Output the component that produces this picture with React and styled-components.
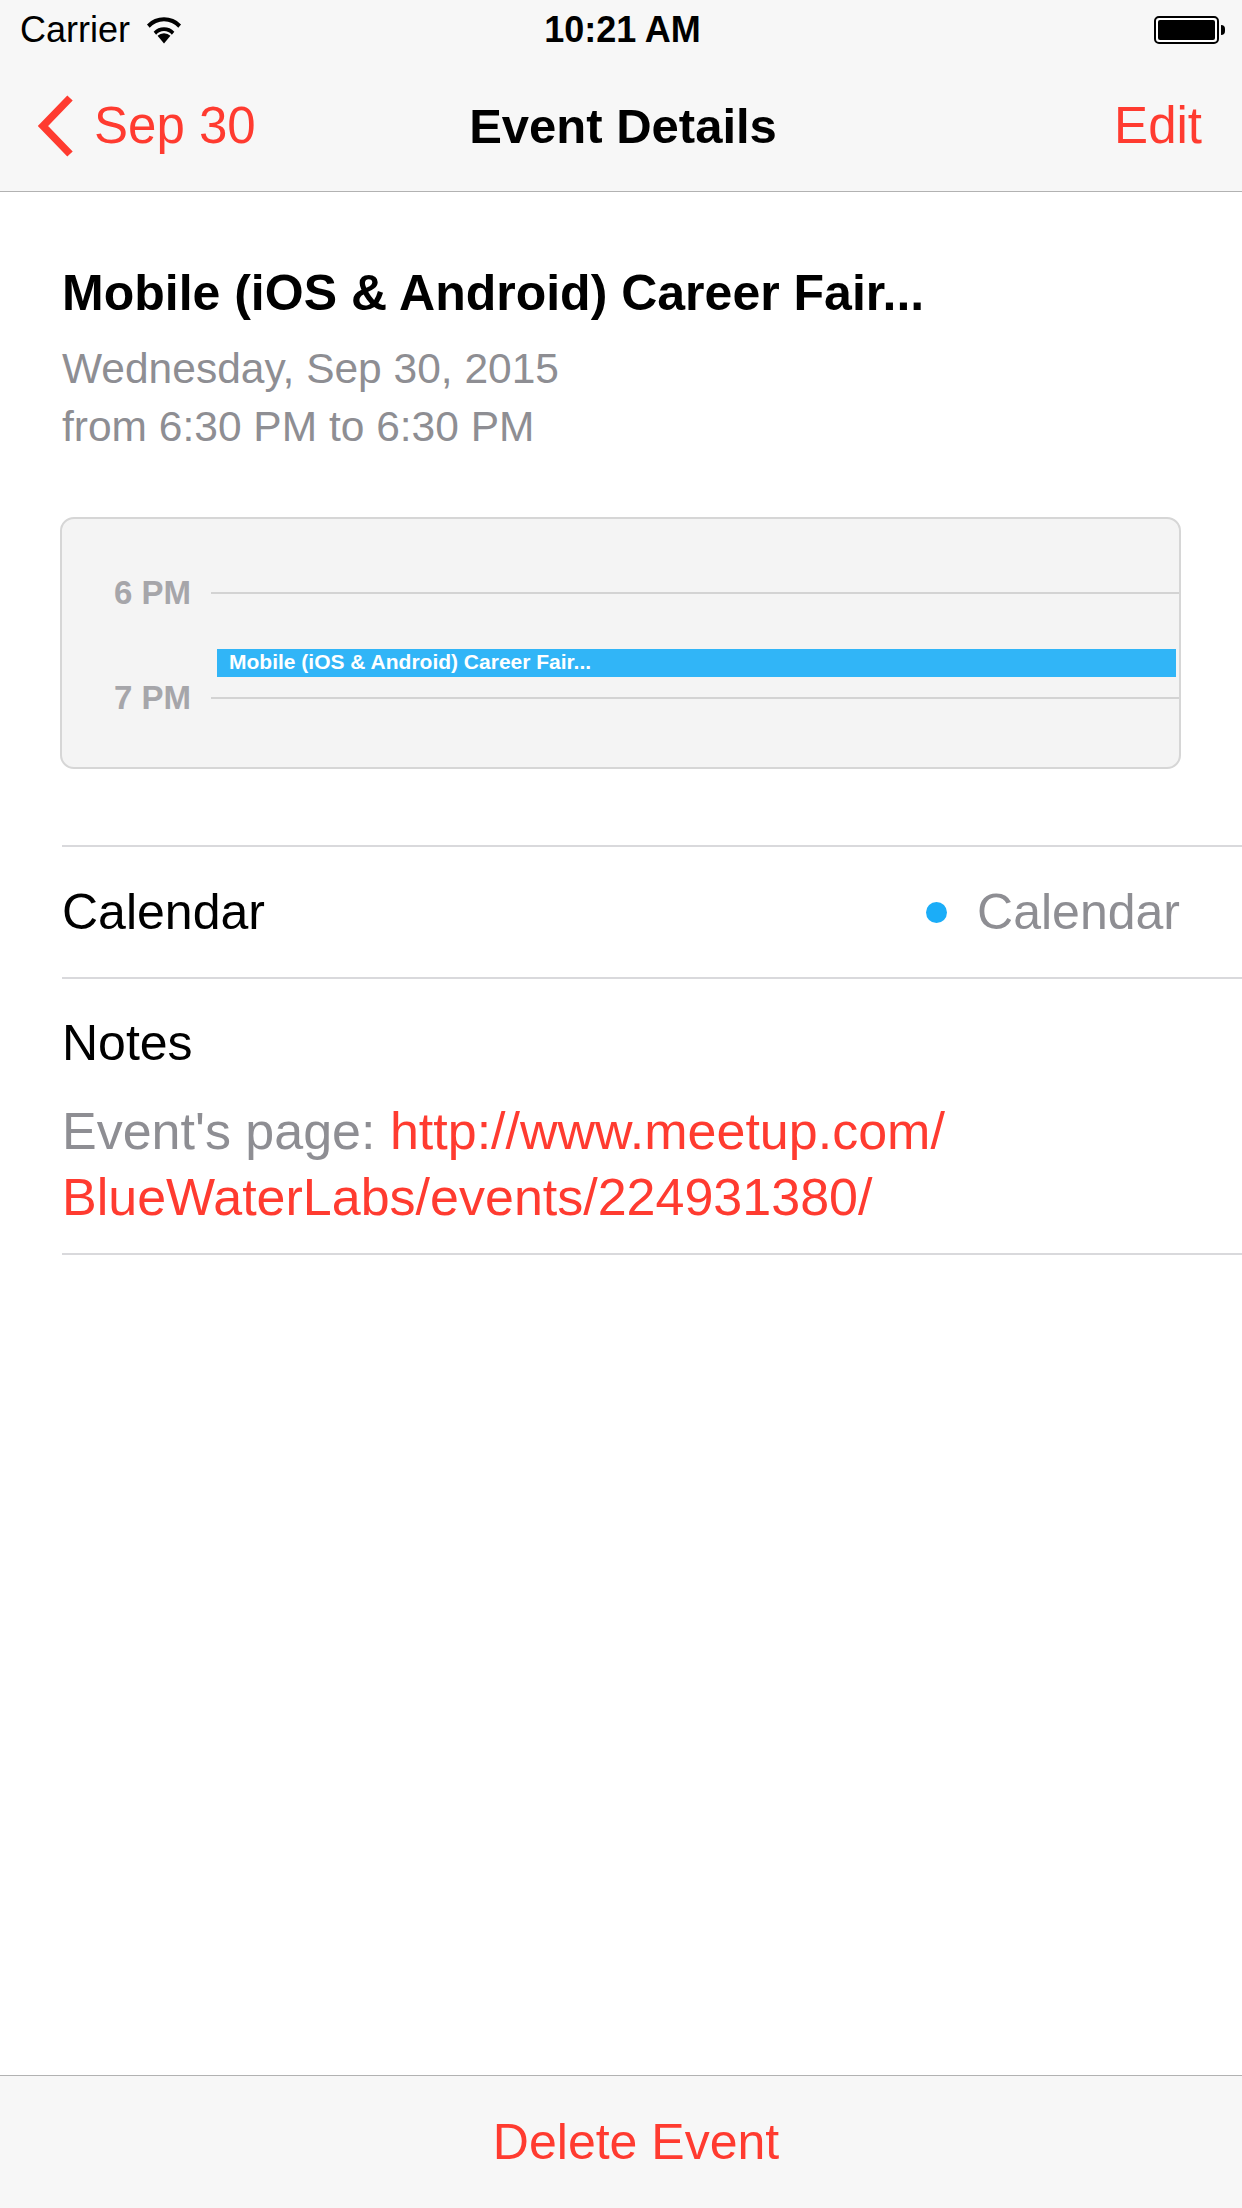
import React from 'react';
import styled, { createGlobalStyle } from 'styled-components';

const RED = '#ff3b30';
const GRAY = '#8e8e93';

const GlobalStyle = createGlobalStyle`
  html, body {
    margin: 0;
    padding: 0;
    background: #ffffff;
  }
  body {
    font-family: "Liberation Sans", Arial, sans-serif;
    -webkit-font-smoothing: antialiased;
  }
`;

const WifiIcon = () => (
  <svg width="38" height="28" viewBox="0 0 34 26">
    <path d="M17 25.5 L11 18.4 A8.6 8.6 0 0 1 23 18.4 Z" fill="#000" />
    <path
      d="M7.4 14.6 A13.4 13.4 0 0 1 26.6 14.6 L24.3 17.3 A9.8 9.8 0 0 0 9.7 17.3 Z"
      fill="#000"
    />
    <path
      d="M1.2 7.8 A22 22 0 0 1 32.8 7.8 L30.3 10.8 A18 18 0 0 0 3.7 10.8 Z"
      fill="#000"
    />
  </svg>
);

const BackChevron = () => (
  <svg width="40" height="64" viewBox="0 0 40 64">
    <polyline
      points="34,4 7,32 34,60"
      fill="none"
      stroke={RED}
      strokeWidth="7.5"
      strokeLinecap="butt"
      strokeLinejoin="miter"
    />
  </svg>
);

const App = () => {
  return (
    <>
      <GlobalStyle />
      <Page>
        <TopBars>
          <StatusBar>
            <StatusLeft>
              <Carrier>Carrier</Carrier>
              <WifiIcon />
            </StatusLeft>
            <Clock>10:21 AM</Clock>
            <StatusRight>
              <Battery>
                <BatteryBody>
                  <BatteryLevel />
                </BatteryBody>
                <BatteryNub />
              </Battery>
            </StatusRight>
          </StatusBar>
          <NavBar>
            <BackButton>
              <BackChevron />
              <span>Sep 30</span>
            </BackButton>
            <NavTitle>Event Details</NavTitle>
            <NavAction>Edit</NavAction>
          </NavBar>
        </TopBars>

        <Content>
          <Summary>
            <EventTitle>Mobile (iOS &amp; Android) Career Fair...</EventTitle>
            <Meta>Wednesday, Sep 30, 2015</Meta>
            <Meta>from 6:30 PM to 6:30 PM</Meta>
          </Summary>

          <DayCard>
            <HourRow>
              <HourLabel>6 PM</HourLabel>
              <HourLine />
            </HourRow>
            <HourRow>
              <HourLabel>7 PM</HourLabel>
              <HourLine />
            </HourRow>
            <EventBlock>Mobile (iOS &amp; Android) Career Fair...</EventBlock>
          </DayCard>

          <Cell>
            <CellLabel>Calendar</CellLabel>
            <CellValue>
              <Dot />
              Calendar
            </CellValue>
          </Cell>

          <NotesCell>
            <CellLabel>Notes</CellLabel>
            <NoteText>
              Event's page:{' '}
              <Link>
                http://www.meetup.com/<wbr />BlueWaterLabs/events/224931380/
              </Link>
            </NoteText>
          </NotesCell>
        </Content>

        <Toolbar>
          <DeleteButton>Delete Event</DeleteButton>
        </Toolbar>
      </Page>
    </>
  );
};

const Page = styled.div`
  width: 1242px;
  height: 2208px;
  display: flex;
  flex-direction: column;
  background: #ffffff;
  overflow: hidden;
`;

const TopBars = styled.header`
  background: #f7f7f7;
  border-bottom: 1px solid #b2b2b2;
`;

const StatusBar = styled.div`
  height: 60px;
  display: grid;
  grid-template-columns: 1fr auto 1fr;
  align-items: center;
  padding: 0 17px 0 20px;
`;

const StatusLeft = styled.div`
  display: flex;
  align-items: center;
  gap: 15px;
`;

const Carrier = styled.span`
  font-size: 36px;
  color: #000;
`;

const Clock = styled.span`
  font-size: 36px;
  font-weight: 700;
  color: #000;
`;

const StatusRight = styled.div`
  display: flex;
  justify-content: flex-end;
`;

const Battery = styled.div`
  display: flex;
  align-items: center;
`;

const BatteryBody = styled.div`
  width: 65px;
  height: 28px;
  box-sizing: border-box;
  padding: 2px;
  border: 2px solid #000;
  border-radius: 5px;
  background: #ffffff;
  display: flex;
`;

const BatteryLevel = styled.div`
  flex: 1;
  border-radius: 2px;
  background: #000;
`;

const BatteryNub = styled.div`
  width: 4px;
  height: 10px;
  margin-left: 2px;
  border-radius: 0 5px 5px 0;
  background: #000;
`;

const NavBar = styled.nav`
  height: 131px;
  display: grid;
  grid-template-columns: 1fr auto 1fr;
  align-items: center;
  padding: 0 40px 0 36px;
`;

const BackButton = styled.div`
  display: flex;
  align-items: center;
  gap: 18px;
  color: ${RED};
  font-size: 51px;
`;

const NavTitle = styled.div`
  font-size: 49px;
  font-weight: 700;
  color: #000;
  padding-left: 8px;
`;

const NavAction = styled.div`
  justify-self: end;
  font-size: 51px;
  color: ${RED};
`;

const Content = styled.main`
  flex: 1;
  display: flex;
  flex-direction: column;
`;

const Summary = styled.section`
  padding: 71px 62px 0;
`;

const EventTitle = styled.h1`
  margin: 0 0 17px;
  font-size: 50px;
  line-height: 60px;
  font-weight: 700;
  color: #000;
`;

const Meta = styled.div`
  font-size: 42.5px;
  line-height: 58px;
  color: ${GRAY};
`;

const DayCard = styled.div`
  position: relative;
  margin: 61px 61px 0 60px;
  height: 252px;
  box-sizing: border-box;
  padding-top: 54px;
  background: #f4f4f4;
  border: 2px solid #d6d6d6;
  border-radius: 14px;
  display: flex;
  flex-direction: column;
  gap: 65px;
`;

const HourRow = styled.div`
  height: 40px;
  display: flex;
  align-items: center;
  gap: 20px;
`;

const HourLabel = styled.span`
  width: 129px;
  text-align: right;
  font-size: 33px;
  font-weight: 700;
  color: #a6a6aa;
`;

const HourLine = styled.div`
  flex: 1;
  height: 2px;
  background: #d3d3d3;
`;

const EventBlock = styled.div`
  position: absolute;
  top: 130px;
  left: 155px;
  right: 3px;
  height: 28px;
  padding-left: 12px;
  background: #31b5f7;
  color: #ffffff;
  font-size: 21px;
  font-weight: 700;
  line-height: 26px;
  white-space: nowrap;
  overflow: hidden;
`;

const Cell = styled.div`
  margin: 76px 0 0 62px;
  height: 130px;
  padding-right: 62px;
  display: flex;
  align-items: center;
  justify-content: space-between;
  border-top: 2px solid #d9d9dc;
  border-bottom: 2px solid #d9d9dc;
`;

const CellLabel = styled.div`
  font-size: 50px;
  line-height: 66px;
  color: #000;
`;

const CellValue = styled.div`
  display: flex;
  align-items: center;
  gap: 30px;
  font-size: 50px;
  color: ${GRAY};
`;

const Dot = styled.span`
  width: 21px;
  height: 21px;
  border-radius: 50%;
  background: #1badf8;
`;

const NotesCell = styled.div`
  margin-left: 62px;
  padding: 31px 0 23px 0;
  border-bottom: 2px solid #d9d9dc;
  display: flex;
  flex-direction: column;
  gap: 22px;
`;

const NoteText = styled.div`
  font-size: 52px;
  line-height: 66px;
  color: ${GRAY};
  width: 1060px;
`;

const Link = styled.span`
  color: ${RED};
`;

const Toolbar = styled.footer`
  height: 132px;
  background: #f7f7f7;
  border-top: 1px solid #b2b2b2;
  display: flex;
  align-items: center;
  justify-content: center;
`;

const DeleteButton = styled.div`
  font-size: 50px;
  color: ${RED};
  padding-left: 30px;
`;

export default App;
